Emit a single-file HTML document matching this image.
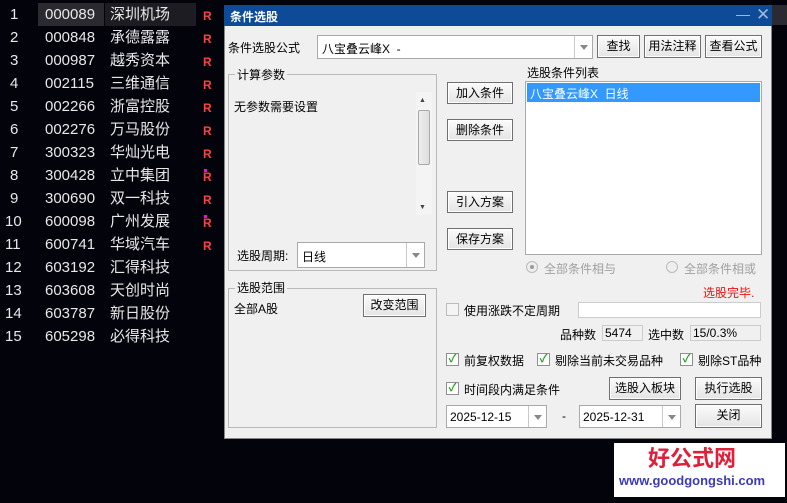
<!DOCTYPE html>
<html><head><meta charset="utf-8"><style>
*{margin:0;padding:0;box-sizing:border-box}
body{width:787px;height:503px;background:#03030b;position:relative;overflow:hidden;font-family:"Liberation Sans","Noto Sans CJK SC",sans-serif;font-size:12px;color:#000}
.a{position:absolute;white-space:nowrap}
.row{position:absolute;left:0;width:224px;height:23px;color:#e8e8e8;font-size:15px;line-height:23px}
.row span{position:absolute}
.r{color:#ff4040;font-weight:bold;font-size:12px;left:203px;top:2px}
.btn{position:absolute;background:linear-gradient(#fbfbfb,#e4e4e4);border:1px solid #707070;text-align:center;font-size:12px;line-height:20px;box-shadow:inset 0 0 0 1px #fff}
.grp{position:absolute;border:1px solid #b9b9b9}
.gl{position:absolute;background:#f0f0f0;padding:0 2px;font-size:12px;line-height:14px}
.fld{position:absolute;background:#fff;border:1px solid #a9a9a9}
.dd{position:absolute;right:0;top:0;bottom:0;width:18px;border-left:1px solid #c8c8c8}
.dd:after{content:"";position:absolute;left:5px;top:50%;margin-top:-2px;border:4px solid transparent;border-top:5px solid #888}
.cb{position:absolute;width:13px;height:13px;border:1px solid #8f8f8f;background:#fff;color:#21a121;font-size:11px;line-height:11px;text-align:center;font-weight:bold}
</style></head><body>
<div class="row" style="top:3px"><span style="left:10px">1</span><span style="left:38px;width:66px;background:#2a2a30;padding-left:7px">000089</span><span style="left:105px;width:91px;background:#1c1c22;padding-left:5px">深圳机场</span><span class="r">R</span></div>
<div class="row" style="top:26px"><span style="left:10px">2</span><span style="left:45px">000848</span><span style="left:110px">承德露露</span><span class="r">R</span></div>
<div class="row" style="top:49px"><span style="left:10px">3</span><span style="left:45px">000987</span><span style="left:110px">越秀资本</span><span class="r">R</span></div>
<div class="row" style="top:72px"><span style="left:10px">4</span><span style="left:45px">002115</span><span style="left:110px">三维通信</span><span class="r">R</span></div>
<div class="row" style="top:95px"><span style="left:10px">5</span><span style="left:45px">002266</span><span style="left:110px">浙富控股</span><span class="r">R</span></div>
<div class="row" style="top:118px"><span style="left:10px">6</span><span style="left:45px">002276</span><span style="left:110px">万马股份</span><span class="r">R</span></div>
<div class="row" style="top:141px"><span style="left:10px">7</span><span style="left:45px">300323</span><span style="left:110px">华灿光电</span><span class="r">R</span></div>
<div class="row" style="top:164px"><span style="left:10px">8</span><span style="left:45px">300428</span><span style="left:110px">立中集团</span><span class="r">R</span></div>
<div class="row" style="top:187px"><span style="left:10px">9</span><span style="left:45px">300690</span><span style="left:110px">双一科技</span><span class="r">R</span></div>
<div class="row" style="top:210px"><span style="left:5px">10</span><span style="left:45px">600098</span><span style="left:110px">广州发展</span><span class="r">R</span></div>
<div class="row" style="top:233px"><span style="left:5px">11</span><span style="left:45px">600741</span><span style="left:110px">华域汽车</span><span class="r">R</span></div>
<div class="row" style="top:256px"><span style="left:5px">12</span><span style="left:45px">603192</span><span style="left:110px">汇得科技</span></div>
<div class="row" style="top:279px"><span style="left:5px">13</span><span style="left:45px">603608</span><span style="left:110px">天创时尚</span></div>
<div class="row" style="top:302px"><span style="left:5px">14</span><span style="left:45px">603787</span><span style="left:110px">新日股份</span></div>
<div class="row" style="top:325px"><span style="left:5px">15</span><span style="left:45px">605298</span><span style="left:110px">必得科技</span></div>
<div class="a" style="left:204px;top:169px;width:3px;height:3px;background:#f0f"></div>
<div class="a" style="left:204px;top:215px;width:3px;height:3px;background:#f0f"></div>
<div class="a" style="left:772px;top:5px;width:15px;height:20px;background:#2a2a30"></div>

<div class="a" style="left:224px;top:5px;width:548px;height:434px;background:#f0f0f0;border:1px solid #888"></div>
<div class="a" style="left:224px;top:5px;width:548px;height:21px;background:#0d4a97"></div>
<div class="a" style="left:230px;top:8px;color:#fff;font-weight:bold;font-size:12px">条件选股</div>
<div class="a" style="left:736px;top:15px;width:14px;height:1px;background:#9fb8d8"></div>
<div class="a" style="left:756px;top:5px;color:#9fb8d8;font-size:17px">✕</div>

<div class="a" style="left:228px;top:39px">条件选股公式</div>
<div class="fld" style="left:317px;top:35px;width:276px;height:24px"><span class="a" style="left:4px;top:4px;font-size:12px">八宝叠云峰X&nbsp; -</span><div class="dd"></div></div>
<div class="btn" style="left:597px;top:35px;width:43px;height:23px">查找</div>
<div class="btn" style="left:644px;top:35px;width:57px;height:23px">用法注释</div>
<div class="btn" style="left:705px;top:35px;width:57px;height:23px">查看公式</div>

<div class="grp" style="left:228px;top:74px;width:209px;height:197px"></div>
<div class="gl" style="left:235px;top:68px">计算参数</div>
<div class="a" style="left:234px;top:98px">无参数需要设置</div>
<div class="a" style="left:416px;top:92px;width:16px;height:123px;background:#f4f4f4"></div>
<div class="a" style="left:418px;top:110px;width:12px;height:55px;background:linear-gradient(90deg,#eee,#ddd);border:1px solid #aaa;border-radius:2px"></div>
<div class="a" style="left:419px;top:97px;font-size:7px;color:#444">▲</div>
<div class="a" style="left:419px;top:204px;font-size:7px;color:#444">▼</div>
<div class="a" style="left:237px;top:247px">选股周期:</div>
<div class="fld" style="left:297px;top:242px;width:128px;height:26px"><span class="a" style="left:4px;top:5px">日线</span><div class="dd"></div></div>

<div class="btn" style="left:447px;top:82px;width:66px;height:22px">加入条件</div>
<div class="btn" style="left:447px;top:119px;width:66px;height:22px">删除条件</div>
<div class="btn" style="left:447px;top:191px;width:66px;height:22px">引入方案</div>
<div class="btn" style="left:447px;top:228px;width:66px;height:22px">保存方案</div>

<div class="a" style="left:527px;top:64px">选股条件列表</div>
<div class="fld" style="left:525px;top:81px;width:237px;height:174px"><div class="a" style="left:1px;top:1px;width:233px;height:19px;background:#3399ff;color:#fff;padding:2px 3px">八宝叠云峰X&nbsp; 日线</div></div>

<div class="a" style="left:526px;top:261px;width:12px;height:12px;border-radius:50%;border:1px solid #bbb;background:#eee"><div class="a" style="left:3px;top:3px;width:4px;height:4px;border-radius:50%;background:#999"></div></div>
<div class="a" style="left:544px;top:260px;color:#a0a0a0">全部条件相与</div>
<div class="a" style="left:666px;top:261px;width:12px;height:12px;border-radius:50%;border:1px solid #bbb;background:#eee"></div>
<div class="a" style="left:684px;top:260px;color:#a0a0a0">全部条件相或</div>
<div class="a" style="left:703px;top:284px;color:#f01010">选股完毕.</div>

<div class="grp" style="left:228px;top:288px;width:209px;height:140px"></div>
<div class="gl" style="left:235px;top:281px">选股范围</div>
<div class="a" style="left:234px;top:300px">全部A股</div>
<div class="btn" style="left:363px;top:294px;width:63px;height:23px">改变范围</div>

<div class="cb" style="left:446px;top:303px;background:#f4f4f4;border-color:#bbb"></div>
<div class="a" style="left:464px;top:302px">使用涨跌不定周期</div>
<div class="fld" style="left:578px;top:302px;width:183px;height:16px;border-color:#ccc"></div>
<div class="a" style="left:560px;top:326px">品种数</div>
<div class="a" style="left:602px;top:325px;width:41px;height:16px;border:1px solid #ccc;padding-left:2px;line-height:14px">5474</div>
<div class="a" style="left:648px;top:326px">选中数</div>
<div class="a" style="left:690px;top:325px;width:71px;height:16px;border:1px solid #ccc;padding-left:2px;line-height:14px">15/0.3%</div>

<div class="cb" style="left:446px;top:353px">✓</div><div class="a" style="left:464px;top:352px">前复权数据</div>
<div class="cb" style="left:537px;top:353px">✓</div><div class="a" style="left:555px;top:352px">剔除当前未交易品种</div>
<div class="cb" style="left:680px;top:353px">✓</div><div class="a" style="left:698px;top:352px">剔除ST品种</div>
<div class="cb" style="left:446px;top:382px">✓</div><div class="a" style="left:464px;top:381px">时间段内满足条件</div>
<div class="btn" style="left:609px;top:377px;width:72px;height:23px">选股入板块</div>
<div class="btn" style="left:695px;top:377px;width:67px;height:23px">执行选股</div>

<div class="fld" style="left:446px;top:405px;width:101px;height:23px"><span class="a" style="left:3px;top:4px">2025-12-15</span><div class="dd"></div></div>
<div class="a" style="left:562px;top:409px">-</div>
<div class="fld" style="left:579px;top:405px;width:102px;height:23px"><span class="a" style="left:3px;top:4px">2025-12-31</span><div class="dd"></div></div>
<div class="btn" style="left:695px;top:404px;width:67px;height:24px">关闭</div>

<div class="a" style="left:614px;top:443px;width:171px;height:54px;background:#fff"></div>
<div class="a" style="left:648px;top:446px;color:#e0203a;font-weight:bold;font-size:22px;line-height:26px">好公式网</div>
<div class="a" style="left:619px;top:473px;color:#3c3cb4;font-weight:bold;font-size:13px">www.goodgongshi.com</div>
</body></html>
